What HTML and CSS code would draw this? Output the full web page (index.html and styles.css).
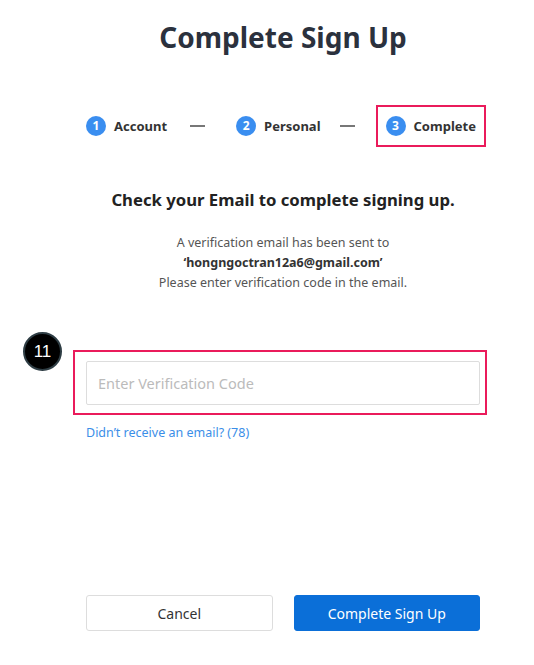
FILE: index.html
```html
<!DOCTYPE html>
<html>
<head>
	<meta charset="utf-8">
	<meta name="viewport" content="width=device-width, initial-scale=1">
	<title>Complete Sign Up</title>
	<link rel="stylesheet" href="styles.css">
</head>
<body>
	<div class="page">
		<h1 class="title">Complete Sign Up</h1>

		<div class="steps">
			<div class="step">
				<span class="num">1</span>
				<span class="label">Account</span>
			</div>
			<span class="dash dash1"></span>
			<div class="step">
				<span class="num">2</span>
				<span class="label">Personal</span>
			</div>
			<span class="dash dash2"></span>
			<div class="step step_hl">
				<span class="num">3</span>
				<span class="label">Complete</span>
			</div>
		</div>

		<h3 class="check">Check your Email to complete signing up.</h3>

		<p class="info">
			A verification email has been sent to<br>
			<b>‘hongngoctran12a6@gmail.com’</b><br>
			Please enter verification code in the email.
		</p>

		<div class="code_box">
			<span class="badge">11</span>
			<input type="text" class="code_input" placeholder="Enter Verification Code">
		</div>

		<a href="#" class="resend">Didn’t receive an email? (78)</a>

		<div class="actions">
			<button type="button" class="btn btn_cancel">Cancel</button>
			<button type="button" class="btn btn_submit">Complete Sign Up</button>
		</div>
	</div>
</body>
</html>
```

FILE: styles.css
```css
body
{
	margin: 0;
	font-family: "Noto Sans", "Open Sans", sans-serif;
	background: #fff;
	color: #333;
}
.page
{
	width: 394px;
	margin-left: 86px;
}
.title
{
	margin: 18px 0 0;
	font-size: 28px;
	font-weight: 700;
	line-height: 38px;
	text-align: center;
	color: #2b313d;
}
.steps
{
	display: flex;
	align-items: center;
	margin-top: 49px;
	height: 42px;
	white-space: nowrap;
}
.step
{
	display: flex;
	align-items: center;
	gap: 8px;
	flex-shrink: 0;
}
.num
{
	width: 20px;
	height: 20px;
	border-radius: 50%;
	background: #3a8ef0;
	color: #fff;
	font-size: 12px;
	font-weight: 700;
	line-height: 20px;
	text-align: center;
}
.label
{
	font-size: 13px;
	font-weight: 700;
	color: #333;
}
.dash
{
	flex-shrink: 0;
	width: 15px;
	height: 2px;
	background: #777;
}
.dash1
{
	margin: 0 31px 0 23px;
}
.dash2
{
	margin: 0 21px 0 19px;
}
.step_hl
{
	height: 38px;
	padding: 0 8px;
	border: 2px solid #ea1b5b;
}
.check
{
	margin: 42px -20px 0;
	font-size: 16.7px;
	font-weight: 700;
	line-height: 22px;
	text-align: center;
	color: #222;
}
.info
{
	margin: 22px 0 0;
	font-size: 12.5px;
	line-height: 20px;
	text-align: center;
	color: #555;
}
.info b
{
	color: #333;
}
.code_box
{
	position: relative;
	margin: 57px -7px 0 -13px;
	padding: 9px 5px 8px 11px;
	border: 2px solid #ea1b5b;
}
.badge
{
	position: absolute;
	left: -52px;
	top: -20px;
	width: 35px;
	height: 35px;
	border-radius: 50%;
	background: #000;
	border: 2px solid #2e3d44;
	color: #fff;
	font-family: "Liberation Sans", Arial, sans-serif;
	font-size: 17px;
	line-height: 35px;
	text-align: center;
}
.code_input
{
	display: block;
	box-sizing: border-box;
	width: 394px;
	height: 44px;
	padding: 0 11px;
	border: 1px solid #ddd;
	border-radius: 2px;
	font-family: inherit;
	font-size: 14.5px;
	color: #333;
	outline: none;
}
.code_input::placeholder
{
	color: #bbb;
}
.resend
{
	display: inline-block;
	margin-top: 9px;
	font-size: 12.5px;
	line-height: 18px;
	color: #3b8ee8;
	text-decoration: none;
}
.actions
{
	display: flex;
	gap: 21px;
	margin-top: 153px;
}
.btn
{
	flex: 1;
	height: 36px;
	border-radius: 3px;
	font-family: inherit;
	font-size: 14px;
	cursor: pointer;
}
.btn_cancel
{
	background: #fff;
	border: 1px solid #ddd;
	color: #333;
}
.btn_submit
{
	background: #0b6fd8;
	border: 1px solid #0b6fd8;
	color: #fff;
}
```
